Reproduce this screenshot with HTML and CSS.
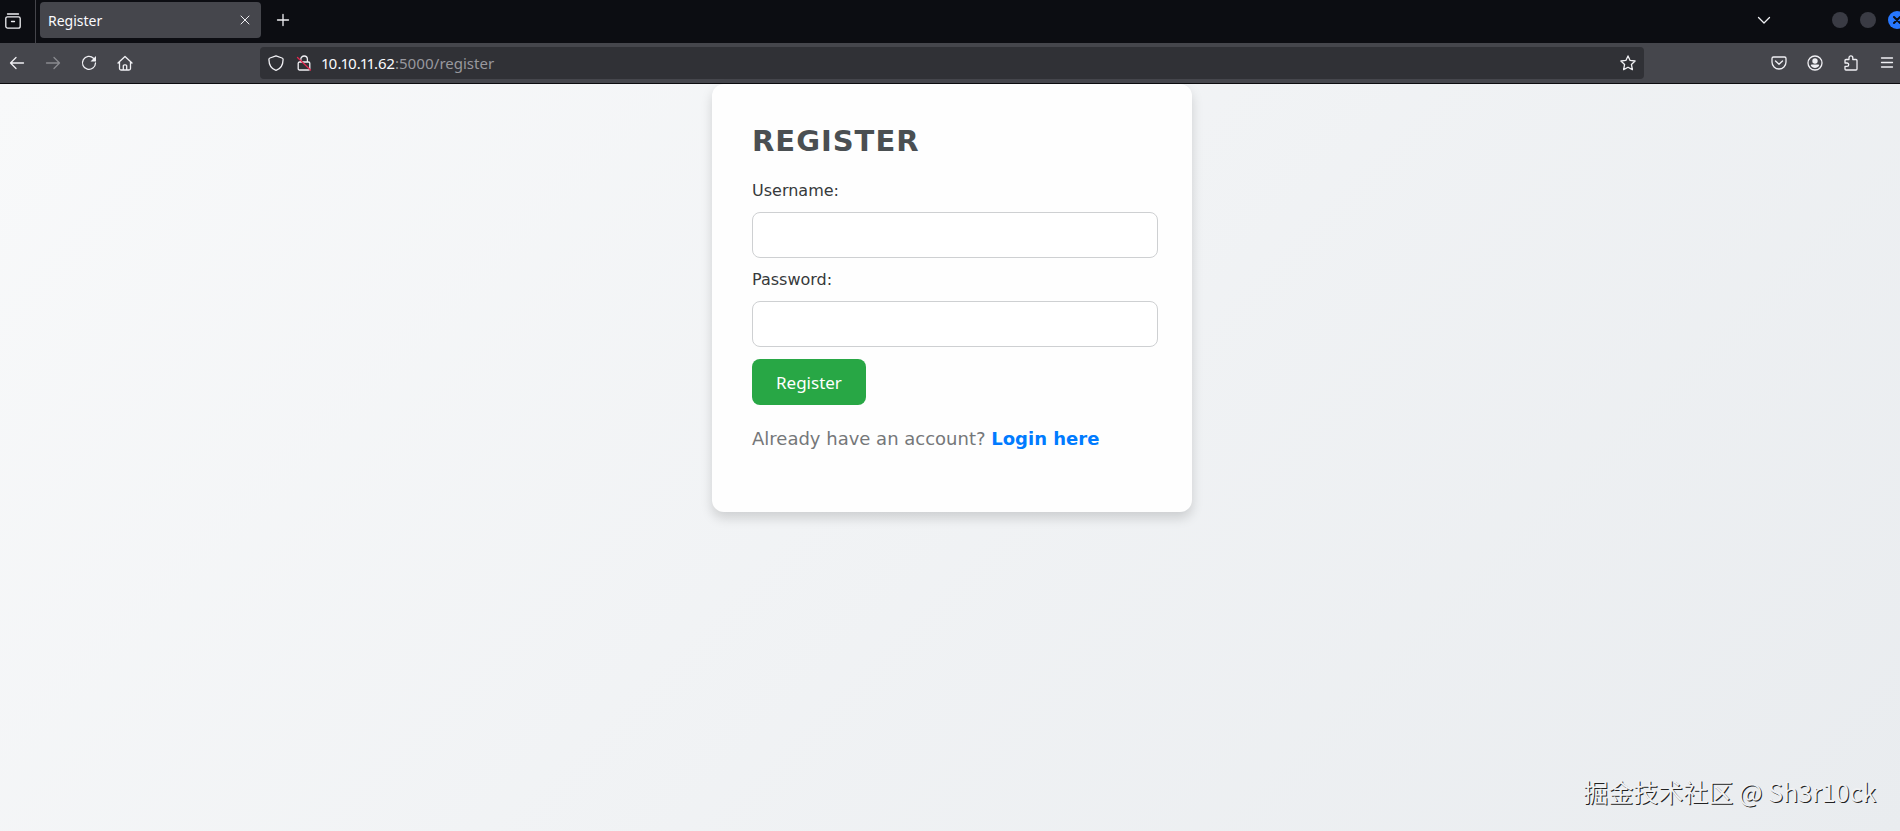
FILE: index.html
```
<!DOCTYPE html>
<html lang="en">
<head>
    <meta charset="UTF-8">
    <meta name="viewport" content="width=device-width, initial-scale=1.0">
    <title>Register</title>
    <link rel="stylesheet" href="styles.css">
</head>
<body>
    <div class="window">
        <header>
            <div class="tab-bar">
                <button class="icon-btn recent" aria-label="Recent browsing">
                    <svg viewBox="0 0 16 16"><path d="M2.5 1h11M2.500 3.800h11A1.700 1.700 0 0 1 15.200 5.500v7.700a2 2 0 0 1-2 2H2.800a2 2 0 0 1-2-2V5.500A1.700 1.700 0 0 1 2.500 3.800zM6.500 8.500h3"/></svg>
                </button>
                <div class="tab">
                    <span>Register</span>
                    <button class="icon-btn close-tab" aria-label="Close tab">
                        <svg viewBox="0 0 16 16"><path d="M4 4l8 8M12 4l-8 8"/></svg>
                    </button>
                </div>
                <button class="icon-btn new-tab" aria-label="New tab">
                    <svg viewBox="0 0 16 16"><path d="M8 2.500v11M2.500 8h11"/></svg>
                </button>
                <button class="icon-btn list-tabs" aria-label="List all tabs">
                    <svg viewBox="0 0 16 16"><path d="M2.500 5.500L8 11l5.500-5.500"/></svg>
                </button>
                <div class="window-controls">
                    <button class="dot" aria-label="Minimize"></button>
                    <button class="dot" aria-label="Maximize"></button>
                    <button class="dot close" aria-label="Close">
                        <svg viewBox="0 0 18 18"><path d="M6 6l6 6M12 6l-6 6"/></svg>
                    </button>
                </div>
            </div>

            <div class="nav-bar">
                <div class="nav-buttons">
                    <button class="icon-btn" aria-label="Back">
                        <svg viewBox="0 0 16 16"><path d="M14.500 8H1.500M7 2.500L1.500 8 7 13.500"/></svg>
                    </button>
                    <button class="icon-btn forward" aria-label="Forward" disabled>
                        <svg viewBox="0 0 16 16"><path d="M1.500 8h13M9 2.500L14.500 8 9 13.500"/></svg>
                    </button>
                    <button class="icon-btn" aria-label="Reload">
                        <svg viewBox="0 0 16 16"><path d="M12.500 3.200A6.500 6.500 0 1 0 14.500 8"/><path class="fill" d="M15 1v5.500H9.500z"/></svg>
                    </button>
                    <button class="icon-btn" aria-label="Home">
                        <svg viewBox="0 0 16 16"><path d="M1 8l7-6.500L15 8M2.500 7v6.500a1.500 1.500 0 0 0 1.500 1.500h8a1.500 1.500 0 0 0 1.500-1.500V7M6.300 15v-4a1.200 1.200 0 0 1 1.200-1.200h1a1.200 1.200 0 0 1 1.200 1.200v4"/></svg>
                    </button>
                </div>
                <div class="address-bar">
                    <svg viewBox="0 0 16 16"><path d="M8 .8l6 2.200c.8.300 1.100.800 1.100 1.500C15 9.500 12.500 14 8 15.400 3.500 14 1 9.500.9 4.500c0-.7.300-1.200 1.100-1.500z"/></svg>
                    <svg viewBox="0 0 16 16"><path d="M4.800 7V4.300a3.300 3.300 0 0 1 6.600 0V7M3.500 7h9a1.300 1.300 0 0 1 1.300 1.300v5.400a1.300 1.300 0 0 1-1.300 1.300h-9a1.300 1.300 0 0 1-1.300-1.300V8.300A1.300 1.300 0 0 1 3.500 7z"/><path class="slash" d="M1.500 2.500l13 12.500"/></svg>
                    <div class="url">10.10.11.62<span>:5000/register</span></div>
                    <button class="icon-btn" aria-label="Bookmark this page">
                        <svg viewBox="0 0 16 16"><path d="M8 .9l2.100 4.500 5 .6-3.700 3.400 1 5.200L8 12.200l-4.400 2.400 1-5.200L.9 6l5-.6z"/></svg>
                    </button>
                </div>
                <div class="tools">
                    <button class="icon-btn" aria-label="Save to Pocket">
                        <svg viewBox="0 0 16 16"><path d="M2.500 2h11A1.500 1.500 0 0 1 15 3.500V7A7 7 0 0 1 1 7V3.500A1.500 1.500 0 0 1 2.500 2zM4.500 6L8 9.300 11.500 6"/></svg>
                    </button>
                    <button class="icon-btn" aria-label="Account">
                        <svg viewBox="0 0 16 16"><circle cx="8" cy="8" r="7"/><circle class="fill" cx="8" cy="6" r="2.700"/><path class="fill" d="M3.800 10.500c0-.6.4-.9.900-.9h6.600c.5 0 .9.300.9.900-.8 1.700-2.400 2.400-4.200 2.400s-3.400-.7-4.200-2.400z"/></svg>
                    </button>
                    <button class="icon-btn" aria-label="Extensions">
                        <svg viewBox="0 0 16 16"><path d="M2 5.500a1 1 0 0 1 1-1h3V2.700a1.900 1.900 0 0 1 3.800 0v1.800H13a1 1 0 0 1 1 1V14a1 1 0 0 1-1 1H3a1 1 0 0 1-1-1v-2.600h2a1.700 1.700 0 0 0 0-3.400H2z"/></svg>
                    </button>
                    <button class="icon-btn" aria-label="Menu">
                        <svg viewBox="0 0 16 16"><path d="M2.500 3h11M2.500 7.500h11M2.500 12h11"/></svg>
                    </button>
                </div>
            </div>
        </header>

        <main>
            <div class="container">
                <h2>Register</h2>
                <form>
                    <label for="username">Username:</label>
                    <input type="text" id="username" name="username">

                    <label for="password">Password:</label>
                    <input type="password" id="password" name="password">

                    <button type="submit">Register</button>
                </form>
                <p>Already have an account? <a href="#login">Login here</a></p>
            </div>
        </main>
    </div>
    <div class="watermark">掘金技术社区 @ Sh3r10ck</div>
</body>
</html>
```
FILE: styles.css
```
* {
    box-sizing: border-box;
}
body {
    margin: 0;
    overflow: hidden;
    font-family: "DejaVu Sans", sans-serif;
}
/* the window runs slightly past the right edge of the screen */
.window {
    display: flex;
    flex-direction: column;
    min-height: 100vh;
    margin-right: -4px;
}
header {
    font-family: "Noto Sans", sans-serif;
    color: #fbfbfe;
    border-bottom: 1px solid #0c0c0f;
}
button {
    border: none;
    cursor: pointer;
}
svg {
    display: block;
    flex: none;
    width: 16px;
    height: 16px;
    fill: none;
    stroke: #f0f0f4;
    stroke-width: 1.3;
    stroke-linecap: round;
    stroke-linejoin: round;
}
svg .fill {
    fill: #f0f0f4;
    stroke: none;
}
svg .slash {
    stroke: #e22850;
}
.icon-btn {
    padding: 0;
    background: none;
}

/* tab bar */
.tab-bar {
    display: flex;
    align-items: center;
    height: 43px;
    padding-bottom: 3px;
    background: #0c0d12;
}
.recent {
    height: 43px;
    margin-bottom: -3px;
    padding: 0 14px 2px 5px;
    border-right: 1px solid #45454b;
}
.tab {
    display: flex;
    align-items: center;
    justify-content: space-between;
    width: 221px;
    height: 36px;
    margin-left: 4px;
    padding: 0 8px;
    font-size: 14px;
    background: #45464c;
    border-radius: 4px;
}
.close-tab svg {
    stroke-width: 1;
}
.new-tab {
    margin-left: 14px;
}
.list-tabs {
    margin-left: auto;
}
.window-controls {
    display: flex;
    align-items: center;
    gap: 12px;
    margin-left: 60px;
    margin-right: -2px;
}
.dot {
    width: 16px;
    height: 16px;
    padding: 0;
    background: #3a3b44;
    border-radius: 50%;
}
.dot.close,
.dot.close svg {
    width: 18px;
    height: 18px;
}
.dot.close {
    background: #2777ff;
}
.dot.close svg {
    stroke: #0c0d12;
    stroke-width: 2;
}

/* toolbar */
.nav-bar {
    display: flex;
    align-items: center;
    height: 40px;
    background: #45464c;
}
.nav-buttons {
    display: flex;
    gap: 20px;
    width: 260px;
    padding-left: 9px;
}
.forward {
    opacity: 0.4;
}
.address-bar {
    display: flex;
    flex: 1;
    align-items: center;
    gap: 12px;
    height: 32px;
    padding: 0 8px;
    background: #303136;
    border-radius: 4px;
}
.url {
    flex: 1;
    margin-left: -2px;
    font-size: 15px;
    font-variant-numeric: proportional-nums;
}
.url span {
    color: #98989e;
}
.tools {
    display: flex;
    justify-content: flex-end;
    gap: 20px;
    width: 260px;
    padding-right: 9px;
}

/* page */
main {
    flex: 1;
    background: linear-gradient(135deg, #f8f9fa, #e9ecef);
}
.container {
    width: 480px;
    min-height: 428px;
    margin: 0 auto;
    padding: 40px 34px 40px 40px;
    background: #fefefe;
    border-radius: 12px;
    box-shadow: 0 6px 12px rgba(0, 0, 0, 0.15);
}
h2 {
    margin: 0 0 22px;
    font-size: 29px;
    line-height: 35px;
    letter-spacing: 1px;
    text-transform: uppercase;
    color: #4a4f52;
}
label {
    display: block;
    margin-bottom: 11px;
    font-size: 16px;
    line-height: 20px;
    color: #36393b;
}
input {
    display: block;
    width: 100%;
    height: 46px;
    margin-bottom: 12px;
    padding: 12px;
    font-size: 16px;
    border: 1px solid #ced0d2;
    border-radius: 8px;
}
form button {
    height: 46px;
    padding: 0 24px;
    font-family: "Noto Sans", sans-serif;
    font-size: 17px;
    color: white;
    background: #28a745;
    border-radius: 8px;
}
p {
    margin: 20px 0 0;
    font-size: 18px;
    line-height: 28px;
    color: #757779;
}
a {
    font-weight: bold;
    color: #007bff;
    text-decoration: none;
}
.watermark {
    position: absolute;
    right: 24px;
    bottom: 22px;
    font-family: "Noto Sans CJK SC", sans-serif;
    font-size: 25px;
    color: #f0f1f3;
    text-shadow: 1px 1px 0 #222;
}
```
